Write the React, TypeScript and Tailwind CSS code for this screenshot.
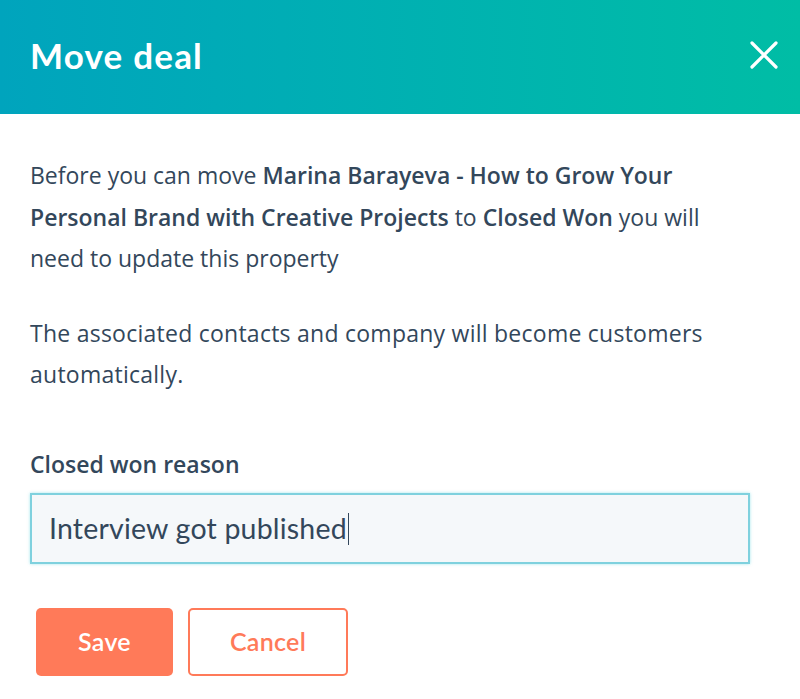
export default function App() {
  return (
    <div className="w-[800px] h-[699px] bg-white font-['Lato',sans-serif] text-[#33475b] overflow-hidden">
      {/* Header */}
      <header className="h-[114px] flex items-center justify-between pl-[30px] pr-[22px] bg-gradient-to-r from-[#00a4bd] to-[#00bda5]">
        <h1 className="text-[35px] font-bold text-white tracking-[1.2px] -mt-[4px]">Move deal</h1>
        <button className="text-white -mt-[4px]" aria-label="Close">
          <svg width="28" height="28" viewBox="0 0 28 28" fill="none" stroke="currentColor" strokeWidth="3.2" strokeLinecap="round">
            <path d="M2 2 L26 26 M26 2 L2 26" />
          </svg>
        </button>
      </header>

      {/* Body */}
      <div className="px-[30px] pt-[41px] font-['Open_Sans',sans-serif] text-[23px] leading-[41.5px]">
        <p>
          Before you can move <span className="font-semibold">Marina Barayeva - How to Grow Your</span>
          <br />
          <span className="font-semibold">Personal Brand with Creative Projects</span> to{" "}
          <span className="font-semibold">Closed Won</span> you will
          <br />
          need to update this property
        </p>
        <p className="mt-[33px] tracking-[0.25px]">
          The associated contacts and company will become customers
          <br />
          automatically.
        </p>

        <label className="block mt-[48px] font-semibold">Closed won reason</label>
        <div className="mt-[8px] w-[720px] h-[71px] border-2 border-[#7fd1de] bg-[#f5f8fa] flex items-center px-[17px] font-['Lato',sans-serif] shadow-[0_0_3px_rgba(0,189,208,0.35)]">
          <span className="text-[28.5px] leading-none tracking-[0.2px]">Interview got published</span>
          <span className="w-[1.5px] h-[32px] bg-[#33475b] ml-[1px]" />
        </div>

        <div className="flex gap-[15px] mt-[44px] ml-[6px] font-['Lato',sans-serif]">
          <button className="w-[137px] h-[68px] rounded-[5px] bg-[#ff7a59] text-white text-[25px] tracking-[0.3px] font-semibold">Save</button>
          <button className="w-[160px] h-[68px] rounded-[5px] border-2 border-[#ff7a59] bg-white text-[#ff7a59] text-[25px] tracking-[0.3px] font-semibold">Cancel</button>
        </div>
      </div>
    </div>
  );
}
